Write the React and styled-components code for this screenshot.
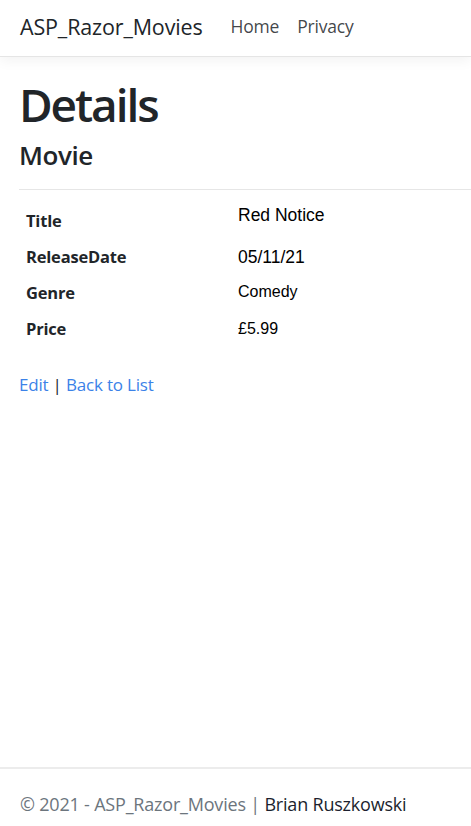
import React from "react";
import styled, { createGlobalStyle } from "styled-components";

const Global = createGlobalStyle`
  html, body { margin: 0; padding: 0; background: #fff; }
  body { font-family: "Open Sans", "Noto Sans", sans-serif; color: #212529; overflow: hidden; }
  #root { min-height: 826px; }
`;

const Page = styled.div`
  display: flex;
  flex-direction: column;
  height: 826px;
  overflow: hidden;
`;

const NavBar = styled.header`
  display: flex;
  align-items: center;
  height: 52px;
  padding: 0 20px 4px;
  border-bottom: 1px solid #e5e5e5;
  box-shadow: 0 4px 12px rgba(0, 0, 0, 0.05);
  box-sizing: content-box;
`;

const Brand = styled.a`
  font-size: 21.5px;
  color: #212529;
  text-decoration: none;
  margin-right: 28px;
  letter-spacing: -0.15px;
`;

const NavLink = styled.a`
  font-size: 17.5px;
  color: rgba(33, 37, 41, 0.85);
  text-decoration: none;
  margin-right: 18px;
  letter-spacing: -0.2px;
`;

const Main = styled.main`
  flex: 1;
  padding: 20px 0 0 19px;
`;

const H1 = styled.h1`
  margin: 0;
  font-size: 46px;
  font-weight: 600;
  line-height: 1.2;
  letter-spacing: -2.1px;
`;

const H4 = styled.h4`
  margin: 8px 0 0;
  font-size: 26px;
  font-weight: 600;
  line-height: 1.2;
  letter-spacing: -0.4px;
`;

const Rule = styled.hr`
  border: 0;
  border-top: 1px solid #e6e6e6;
  margin: 18px 0 0;
`;

const Dl = styled.dl`
  display: grid;
  grid-template-columns: 212px 1fr;
  margin: 12px 0 0 7px;
`;

const Dt = styled.dt`
  font-weight: 700;
  font-size: 16.5px;
  height: 36px;
  display: flex;
  align-items: center;
  letter-spacing: -0.2px;
`;

const Dd = styled.dd`
  margin: 0;
  font-family: "Liberation Sans", Arial, sans-serif;
  font-size: ${(p) => p.$size}px;
  color: #000;
  height: 36px;
  display: flex;
  align-items: center;
  position: relative;
  top: ${(p) => p.$shift}px;
`;

const Actions = styled.div`
  margin-top: 27px;
  font-size: 17px;
  color: #212529;
  letter-spacing: -0.2px;
`;

const Link = styled.a`
  color: #3b82e8;
  text-decoration: none;
`;

const Footer = styled.footer`
  border-top: 2px solid #ececec;
  height: 45px;
  padding: 12px 20px 0;
  display: flex;
  align-items: center;
  font-size: 18px;
  color: #6c757d;
  letter-spacing: -0.2px;
`;

const Author = styled.span`
  color: #1c1f2e;
`;

const rows = [
  { label: "Title", value: "Red Notice", size: 17.5, shift: -5 },
  { label: "ReleaseDate", value: "05/11/21", size: 17.5, shift: 1 },
  { label: "Genre", value: "Comedy", size: 16, shift: 0 },
  { label: "Price", value: "£5.99", size: 16, shift: 1 },
];

export default function App() {
  return (
    <>
      <Global />
      <Page>
        <NavBar>
          <Brand href="#">ASP_Razor_Movies</Brand>
          <NavLink href="#">Home</NavLink>
          <NavLink href="#">Privacy</NavLink>
        </NavBar>
        <Main>
          <H1>Details</H1>
          <H4>Movie</H4>
          <Rule />
          <Dl>
            {rows.map((r) => (
              <React.Fragment key={r.label}>
                <Dt>{r.label}</Dt>
                <Dd $size={r.size} $shift={r.shift}>{r.value}</Dd>
              </React.Fragment>
            ))}
          </Dl>
          <Actions>
            <Link href="#">Edit</Link> | <Link href="#">Back to List</Link>
          </Actions>
        </Main>
        <Footer>
          <span>
            © 2021 - ASP_Razor_Movies | <Author>Brian Ruszkowski</Author>
          </span>
        </Footer>
      </Page>
    </>
  );
}
